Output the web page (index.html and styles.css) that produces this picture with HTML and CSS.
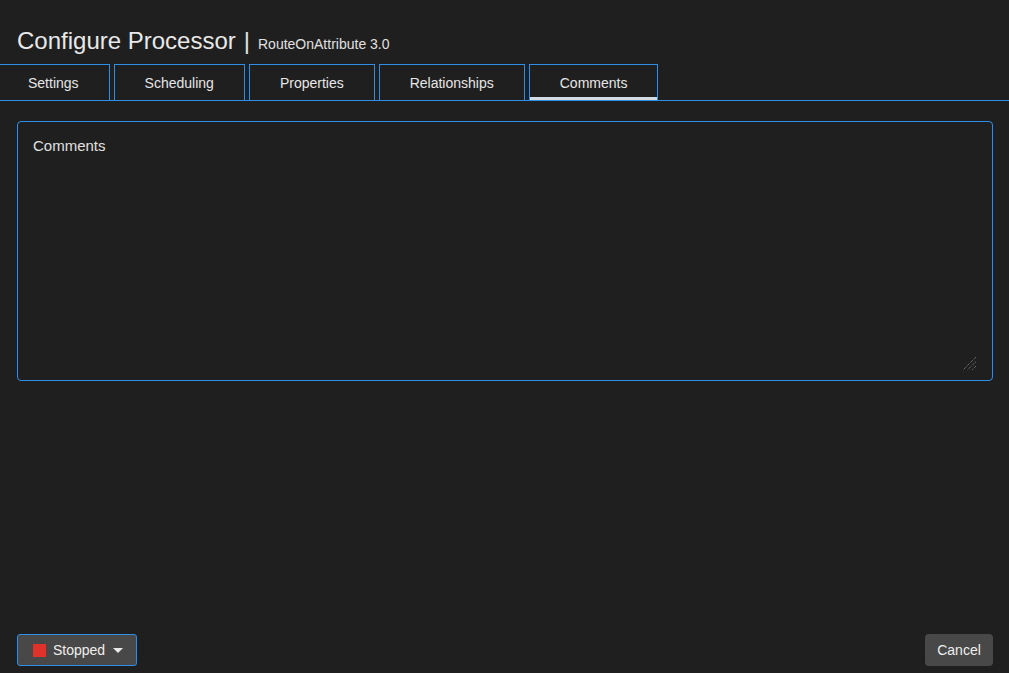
FILE: index.html
```html
<!DOCTYPE html>
<html lang="en">
<head>
<meta charset="utf-8">
<title>Configure Processor</title>
<link rel="stylesheet" href="styles.css">
</head>
<body>
<div class="dialog">
  <header class="header">
    <h1 class="title">Configure Processor</h1>
    <span class="sep">|</span>
    <span class="subtitle">RouteOnAttribute 3.0</span>
  </header>
  <nav class="tabs">
    <div class="tab">Settings</div>
    <div class="tab">Scheduling</div>
    <div class="tab">Properties</div>
    <div class="tab">Relationships</div>
    <div class="tab active">Comments</div>
  </nav>
  <main class="content">
    <div class="field">
      <textarea class="comments" placeholder="Comments"></textarea>
      <svg class="grip" width="15" height="15" viewBox="0 0 15 15">
        <path d="M14 1 L1 14 M14 5.5 L5.5 14 M14 10 L10 14" stroke="#8c8c8c" stroke-width="1" stroke-dasharray="1 1"/>
      </svg>
    </div>
  </main>
  <footer class="footer">
    <button class="status-btn">
      <span class="square"></span>
      <span>Stopped</span>
      <svg class="caret" width="10" height="5" viewBox="0 0 10 5"><path d="M0 0 L10 0 L5 5 Z" fill="#e8e8e8"/></svg>
    </button>
    <button class="cancel-btn">Cancel</button>
  </footer>
</div>
</body>
</html>
```

FILE: styles.css
```css
html, body {
  margin: 0;
  height: 100%;
  background: #1f1f1f;
  color: #e6e6e6;
  font-family: "Liberation Sans", Arial, sans-serif;
}

.dialog {
  height: 100%;
  display: flex;
  flex-direction: column;
}

.header {
  height: 64px;
  box-sizing: border-box;
  display: flex;
  align-items: baseline;
  padding: 27px 17px 0;
}

.title {
  margin: 0;
  font-size: 24px;
  font-weight: normal;
  line-height: 28px;
  color: #e8e8e8;
}

.sep {
  font-size: 24px;
  margin: 0 8px 0 8px;
  color: #e0e0e0;
}

.subtitle {
  font-size: 14px;
  color: #e0e0e0;
}

.tabs {
  display: flex;
  gap: 4px;
  border-bottom: 1px solid #2f8fe6;
  margin-left: -3px;
}

.tab {
  height: 36px;
  box-sizing: border-box;
  border: 1px solid #2f8fe6;
  border-bottom: none;
  padding: 0 30px;
  display: flex;
  align-items: center;
  justify-content: center;
  font-size: 14px;
  color: #e6e6e6;
  position: relative;
}

.tab.active::after {
  content: "";
  position: absolute;
  left: 0;
  right: 0;
  bottom: 0;
  height: 3px;
  background: #d2dae2;
}

.content {
  flex: 1;
  padding: 20px 16px 0 17px;
}

.field {
  position: relative;
  height: 260px;
  box-sizing: border-box;
  border: 1px solid #2f8fe6;
  border-radius: 4px;
  padding: 15px 15px 8px 15px;
}

.comments {
  display: block;
  width: 100%;
  height: 100%;
  box-sizing: border-box;
  background: transparent;
  border: none;
  outline: none;
  resize: none;
  padding: 0;
  font-family: "Liberation Sans", Arial, sans-serif;
  font-size: 15px;
  color: #e6e6e6;
}

.comments::placeholder {
  color: #e0e0e0;
  opacity: 1;
}

.grip {
  position: absolute;
  right: 15px;
  bottom: 9px;
}

.footer {
  display: flex;
  justify-content: space-between;
  padding: 0 16px 7px 17px;
}

.status-btn {
  height: 32px;
  width: 120px;
  box-sizing: border-box;
  background: #484848;
  border: 1px solid #2f8fe6;
  border-radius: 3px;
  color: #efefef;
  font-family: "Liberation Sans", Arial, sans-serif;
  font-size: 14px;
  display: flex;
  align-items: center;
  padding: 0 0 0 15px;
  gap: 7px;
}

.square {
  width: 13px;
  height: 13px;
  background: #e0312a;
}

.caret {
  margin-left: 1px;
}

.cancel-btn {
  height: 32px;
  width: 68px;
  box-sizing: border-box;
  background: #484848;
  border: none;
  border-radius: 4px;
  color: #efefef;
  font-family: "Liberation Sans", Arial, sans-serif;
  font-size: 14px;
  padding: 0;
}
```
